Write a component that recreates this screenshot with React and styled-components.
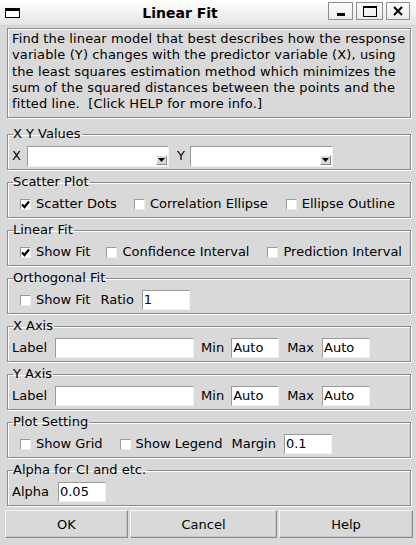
import React from 'react';
import styled, { createGlobalStyle } from 'styled-components';

const GlobalStyle = createGlobalStyle`
  html, body {
    margin: 0;
    padding: 0;
    background: #d9d9d9;
  }
  * {
    box-sizing: border-box;
  }
`;

const Window = styled.div`
  width: 416px;
  height: 545px;
  display: flex;
  flex-direction: column;
  background: #d9d9d9;
  font-family: 'DejaVu Sans', 'Liberation Sans', sans-serif;
  font-size: 13px;
  color: #000;
  overflow: hidden;
`;

const TitleBar = styled.div`
  height: 26px;
  flex: none;
  display: flex;
  align-items: center;
  padding: 0 6px 0 5px;
  background: linear-gradient(#ffffff, #e4e4e4);
  border-bottom: 1px solid #cfcfcf;
`;

const WinIcon = styled.div`
  width: 15px;
  height: 10px;
  border: 1px solid #000;
  border-top-width: 3px;
  background: #fff;
  margin-top: 1px;
`;

const Title = styled.div`
  flex: 1;
  text-align: center;
  font-weight: bold;
  font-size: 14px;
  padding-left: 12px;
`;

const WinButtons = styled.div`
  display: flex;
  gap: 3px;
  margin-top: -3px;
`;

const WinButton = styled.div`
  width: ${p => p.$w || 25}px;
  height: 18px;
  border: 1px solid #8e8e8e;
  background: linear-gradient(#fbfbfb, #ececec);
  display: flex;
  align-items: center;
  justify-content: center;
`;

const Body = styled.div`
  flex: 1;
  display: flex;
  flex-direction: column;
  padding: 2px 3px 0 5px;
`;

const Description = styled.div`
  margin: 0 2px 8px 2px;
  padding: 2px 4px 5px 4px;
  border: 1px solid #8a8a8a;
  box-shadow: 1px 1px 0 #fff, inset 1px 1px 0 #fff;
  line-height: 16.25px;
  letter-spacing: 0.12px;
`;

const Group = styled.fieldset`
  margin: 4px 2px 0 2px;
  padding: 4px 3px 3px 4px;
  border: 1px solid #8a8a8a;
  box-shadow: 1px 1px 0 #fff, inset 1px 1px 0 #fff;
  min-width: 0;
  &:first-of-type {
    margin-top: 0;
  }
`;

const Legend = styled.legend`
  padding: 0 1px 0 0;
  margin-left: 1px;
  line-height: 16px;
  height: 16px;
`;

const Row = styled.div`
  display: flex;
  align-items: center;
  height: 20px;
  white-space: nowrap;
`;

const Text = styled.span`
  margin-left: ${p => p.$ml || 0}px;
  line-height: 16px;
`;

const Entry = styled.div`
  margin-left: ${p => p.$ml || 0}px;
  width: ${p => p.$w || 48}px;
  height: 20px;
  background: #fff;
  border: 1px solid;
  border-color: #9a9a9a #f2f2f2 #f2f2f2 #9a9a9a;
  padding: 0 1px;
  line-height: 18px;
`;

const Combo = styled.div`
  margin-left: ${p => p.$ml || 0}px;
  width: ${p => p.$w}px;
  height: 21px;
  background: #fff;
  border: 1px solid;
  border-color: #9a9a9a #f2f2f2 #f2f2f2 #9a9a9a;
  display: flex;
  justify-content: flex-end;
  align-items: flex-end;
  padding: 0 1px 1px 0;
`;

const ComboArrow = styled.div`
  width: 11px;
  height: 10px;
  background: #d9d9d9;
  border: 1px solid;
  border-color: #fff #8a8a8a #8a8a8a #fff;
  display: flex;
  align-items: center;
  justify-content: center;
`;

const CheckItem = styled.label`
  display: flex;
  align-items: center;
  margin-left: ${p => p.$ml || 0}px;
`;

const CheckBox = styled.span`
  width: 11px;
  height: 11px;
  background: #fff;
  border: 1px solid;
  border-color: #9a9a9a #eeeeee #eeeeee #9a9a9a;
  margin-right: 5px;
  display: flex;
  align-items: center;
  justify-content: center;
`;

const ButtonBar = styled.div`
  display: grid;
  grid-template-columns: 123px 147px 134px;
  column-gap: 2px;
  margin-top: 4px;
`;

const Button = styled.div`
  height: 28px;
  display: flex;
  align-items: center;
  justify-content: center;
  background: #d9d9d9;
  border: 1px solid;
  border-color: #f4f4f4 #8a8a8a #8a8a8a #f4f4f4;
  box-shadow: inset -1px -1px 0 #c4c4c4;
`;

const Check = ({ checked, label, ml }) => (
  <CheckItem $ml={ml}>
    <CheckBox>
      {checked && (
        <svg width="9" height="9" viewBox="0 0 9 9">
          <path d="M1 4.5 L3.5 7 L8 1.5" stroke="#000" strokeWidth="2.2" fill="none" />
        </svg>
      )}
    </CheckBox>
    <Text>{label}</Text>
  </CheckItem>
);

const Arrow = () => (
  <ComboArrow>
    <svg width="7" height="4" viewBox="0 0 7 4">
      <path d="M0 0 H7 L3.5 4 Z" fill="#000" />
    </svg>
  </ComboArrow>
);

export default function App() {
  return (
    <Window>
      <GlobalStyle />
      <TitleBar>
        <WinIcon />
        <Title>Linear Fit</Title>
        <WinButtons>
          <WinButton>
            <svg width="10" height="10" viewBox="0 0 10 10">
              <rect x="1" y="7" width="8" height="3" fill="#000" />
            </svg>
          </WinButton>
          <WinButton $w={27}>
            <svg width="14" height="11" viewBox="0 0 14 11">
              <rect x="0.5" y="0.5" width="13" height="10" fill="none" stroke="#000" />
              <rect x="0" y="0" width="14" height="2" fill="#000" />
            </svg>
          </WinButton>
          <WinButton $w={24}>
            <svg width="10" height="10" viewBox="0 0 10 10">
              <path d="M1 1 L9 9 M9 1 L1 9" stroke="#000" strokeWidth="2" />
            </svg>
          </WinButton>
        </WinButtons>
      </TitleBar>
      <Body>
        <Description>
          Find the linear model that best describes how the response variable (Y) changes with
          the predictor variable (X), using the least squares estimation method which minimizes
          the sum of the squared distances between the points and the fitted line.&nbsp; [Click
          HELP for more info.]
        </Description>

        <Group>
          <Legend>X Y Values</Legend>
          <Row>
            <Text>X</Text>
            <Combo $ml={6} $w={142}>
              <Arrow />
            </Combo>
            <Text $ml={8}>Y</Text>
            <Combo $ml={5} $w={143}>
              <Arrow />
            </Combo>
          </Row>
        </Group>

        <Group>
          <Legend>Scatter Plot</Legend>
          <Row>
            <Check ml={8} checked label="Scatter Dots" />
            <Check ml={17} label="Correlation Ellipse" />
            <Check ml={18} label="Ellipse Outline" />
          </Row>
        </Group>

        <Group>
          <Legend>Linear Fit</Legend>
          <Row>
            <Check ml={8} checked label="Show Fit" />
            <Check ml={16} label="Confidence Interval" />
            <Check ml={18} label="Prediction Interval" />
          </Row>
        </Group>

        <Group>
          <Legend>Orthogonal Fit</Legend>
          <Row>
            <Check ml={8} label="Show Fit" />
            <Text $ml={10}>Ratio</Text>
            <Entry $ml={8}>1</Entry>
          </Row>
        </Group>

        <Group>
          <Legend>X Axis</Legend>
          <Row>
            <Text>Label</Text>
            <Entry $ml={8} $w={139} />
            <Text $ml={7}>Min</Text>
            <Entry $ml={7}>Auto</Entry>
            <Text $ml={8}>Max</Text>
            <Entry $ml={8}>Auto</Entry>
          </Row>
        </Group>

        <Group>
          <Legend>Y Axis</Legend>
          <Row>
            <Text>Label</Text>
            <Entry $ml={8} $w={139} />
            <Text $ml={7}>Min</Text>
            <Entry $ml={7}>Auto</Entry>
            <Text $ml={8}>Max</Text>
            <Entry $ml={8}>Auto</Entry>
          </Row>
        </Group>

        <Group>
          <Legend>Plot Setting</Legend>
          <Row>
            <Check ml={8} label="Show Grid" />
            <Check ml={17} label="Show Legend" />
            <Text $ml={9}>Margin</Text>
            <Entry $ml={8}>0.1</Entry>
          </Row>
        </Group>

        <Group>
          <Legend>Alpha for CI and etc.</Legend>
          <Row>
            <Text>Alpha</Text>
            <Entry $ml={9}>0.05</Entry>
          </Row>
        </Group>

        <ButtonBar>
          <Button>OK</Button>
          <Button>Cancel</Button>
          <Button>Help</Button>
        </ButtonBar>
      </Body>
    </Window>
  );
}
